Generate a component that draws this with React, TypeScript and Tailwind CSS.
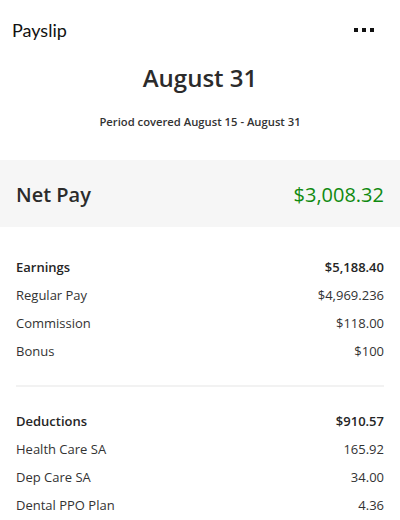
const earnings = [
  { label: 'Regular Pay', value: '$4,969.236' },
  { label: 'Commission', value: '$118.00' },
  { label: 'Bonus', value: '$100' },
];

const deductions = [
  { label: 'Health Care SA', value: '165.92' },
  { label: 'Dep Care SA', value: '34.00' },
  { label: 'Dental PPO Plan', value: '4.36' },
];

function Section({ title, total, rows }: { title: string; total: string; rows: { label: string; value: string }[] }) {
  return (
    <div className="flex flex-col">
      <div className="flex h-7 items-center justify-between text-[13px] font-semibold text-[#252525]">
        <span>{title}</span>
        <span>{total}</span>
      </div>
      {rows.map((r) => (
        <div key={r.label} className="flex h-7 items-center justify-between text-[13px] text-[#333]">
          <span>{r.label}</span>
          <span>{r.value}</span>
        </div>
      ))}
    </div>
  );
}

export default function App() {
  return (
    <div className="h-[520px] w-[400px] overflow-hidden bg-white font-['Open_Sans',sans-serif] text-[#252525]">
      <header className="flex h-[60px] items-center justify-between pl-3 pr-[26px]">
        <span className="font-['Lato',sans-serif] text-[18px] text-[#111]">Payslip</span>
        <div className="flex gap-1">
          <span className="h-1 w-1 bg-[#111]" />
          <span className="h-1 w-1 bg-[#111]" />
          <span className="h-1 w-1 bg-[#111]" />
        </div>
      </header>

      <div className="flex flex-col items-center">
        <h1 className="mt-[2px] text-[24px] font-semibold leading-8 text-[#2b2b2b]">August 31</h1>
        <p className="mt-[20px] text-[11.25px] font-semibold text-[#333]">Period covered August 15 - August 31</p>
      </div>

      <div className="mt-[29px] flex h-[67px] items-center justify-between bg-[#f6f6f6] px-4 pt-[3px]">
        <span className="text-[20px] font-semibold text-[#2b2b2b]">Net Pay</span>
        <span className="text-[20px] text-[#108a10]">$3,008.32</span>
      </div>

      <div className="px-4 pt-[27px]">
        <Section title="Earnings" total="$5,188.40" rows={earnings} />
        <div className="mt-[19px] h-[2px] bg-[#f2f2f2]" />
        <div className="pt-[21px]">
          <Section title="Deductions" total="$910.57" rows={deductions} />
        </div>
      </div>
    </div>
  );
}
